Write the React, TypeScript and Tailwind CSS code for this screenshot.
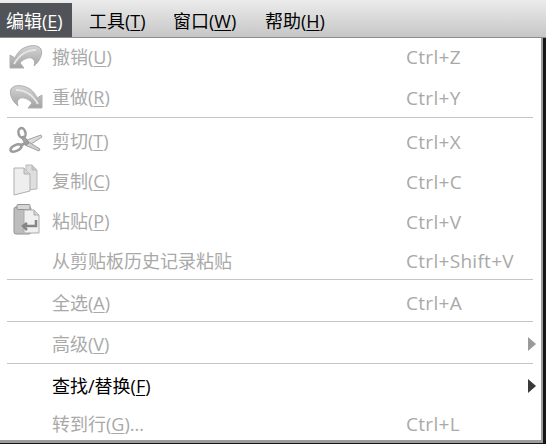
import React from "react";

const font = "font-['Open_Sans','Noto_Sans_CJK_SC',sans-serif]";

const UndoIcon = ({ flip }: { flip?: boolean }) => (
  <svg width="36" height="28" viewBox="0 0 36 28" className={flip ? "-scale-x-100" : ""}>
    <defs>
      <linearGradient id="arrowGrey" x1="0" y1="0" x2="0" y2="1">
        <stop offset="0" stopColor="#d4d4d4" />
        <stop offset="1" stopColor="#a2a2a2" />
      </linearGradient>
    </defs>
    <path
      d="M2 11 L2 24 L16 24 L12 19 C15 15 22 12 25 15 C27 17 27 19 26 22 C32 17 35 10 33 5 C30 0 20 1 14 5 C11 7 8 11 7 14 Z"
      fill="url(#arrowGrey)"
      stroke="#b0b0b0"
      strokeWidth="1"
    />
    <path d="M6 20 C11 11 20 5 28 6" fill="none" stroke="#e6e6e6" strokeWidth="2" />
  </svg>
);

const ScissorsIcon = () => (
  <svg width="36" height="30" viewBox="0 0 36 30">
    <path d="M19 15 L33 10 L34 12 L23 19 Z" fill="#dcdcdc" stroke="#a4a4a4" />
    <path d="M19 16 L32 24 L31 26 L17 20 Z" fill="#d0d0d0" stroke="#a0a0a0" />
    <path d="M21 18 L16 11 L13 12 L18 20 Z" fill="#a6a6a6" stroke="#8e8e8e" />
    <ellipse cx="14" cy="8" rx="3.5" ry="5" fill="none" stroke="#9c9c9c" strokeWidth="2.5" transform="rotate(-15 14 8)" />
    <ellipse cx="8" cy="23" rx="6" ry="3" fill="none" stroke="#9c9c9c" strokeWidth="2.5" transform="rotate(-25 8 23)" />
    <path d="M19 17 L12 21" stroke="#9c9c9c" strokeWidth="3" />
  </svg>
);

const CopyIcon = () => (
  <svg width="28" height="32" viewBox="0 0 28 32">
    <path d="M14 1 H20 L25 6 V25 L14 26 Z" fill="#dedede" stroke="#b8b8b8" />
    <path d="M20 1 V6 H25" fill="#c8c8c8" stroke="#b8b8b8" />
    <path d="M2 4 H12 L18 10 V27 L2 31 Z" fill="#eeeeee" stroke="#b0b0b0" />
    <path d="M12 4 V10 H18" fill="#d4d4d4" stroke="#b0b0b0" />
  </svg>
);

const PasteIcon = () => (
  <svg width="28" height="32" viewBox="0 0 28 32">
    <rect x="1" y="3" width="17" height="27" rx="2" fill="#bdbdbd" stroke="#939393" />
    <rect x="4" y="0.5" width="13" height="5" rx="1" fill="#d6d6d6" stroke="#939393" />
    <path d="M11 6 H21 L26 11 V29 H11 Z" fill="#f0f0f0" stroke="#ababab" />
    <path d="M21 6 V11 H26" fill="#d4d4d4" stroke="#ababab" />
    <path d="M23 16 V22 H11 M14 19 L10 22 L14 26" fill="none" stroke="#858585" strokeWidth="2.5" />
  </svg>
);

type Item = {
  label: string;
  mnemonic?: string;
  suffix?: string;
  shortcut?: string;
  icon?: React.ReactNode;
  sub?: boolean;
  active?: boolean;
  h: string;
};

const Label = ({ text, m, suffix }: { text: string; m?: string; suffix?: string }) => (
  <>
    {text}
    {m && (
      <>
        (<span className="underline underline-offset-2">{m}</span>)
      </>
    )}
    {suffix}
  </>
);

const Row = ({ item }: { item: Item }) => (
  <div className={`flex items-center ${item.h} ${item.active ? "text-black" : "text-[#a9a9a9]"}`}>
    <div className="w-[52px] flex items-center shrink-0">{item.icon}</div>
    <div className="w-[354px] shrink-0 whitespace-nowrap">
      <Label text={item.label} m={item.mnemonic} suffix={item.suffix} />
    </div>
    <div className="flex-1 whitespace-nowrap text-[19px] tracking-[0.3px] pt-[2px]">{item.shortcut}</div>
    {item.sub && (
      <div
        className={`w-0 h-0 mr-[5px] border-y-[7px] border-y-transparent border-l-[8px] ${
          item.active ? "border-l-[#3a3a3a]" : "border-l-[#9a9a9a]"
        }`}
      />
    )}
  </div>
);

const Sep = () => <div className="h-px bg-[#c4c4c4] ml-[7px] mr-[8px]" />;

const menus = [
  { t: "编辑", m: "E", w: "w-[72px] pl-[6px]", on: true },
  { t: "工具", m: "T", w: "w-[84px] pl-[17px]" },
  { t: "窗口", m: "W", w: "w-[92px] pl-[17px]" },
  { t: "帮助", m: "H", w: "w-[84px] pl-[17px]" },
];

export default function App() {
  return (
    <div className={`w-[546px] h-[444px] overflow-hidden bg-[#15151a] text-[18px] leading-none ${font}`}>
      <div className="flex h-[38px] pt-[3px] bg-gradient-to-b from-[#ececec] to-[#c6c6c6] border-b border-[#8c8c8c]">
        {menus.map((m) => (
          <div
            key={m.t}
            className={`flex items-center pt-[2px] ${m.w} ${m.on ? "bg-[#505357] text-white" : "text-black"}`}
          >
            <Label text={m.t} m={m.m} />
          </div>
        ))}
      </div>
      <div className="w-[543px] h-[405px] bg-white border-r-2 border-b-[3px] border-[#9c9c9c]">
        <Row item={{ label: "撤销", mnemonic: "U", shortcut: "Ctrl+Z", icon: <div className="ml-[8px] mt-[3px]"><UndoIcon /></div>, h: "h-[37px]" }} />
        <Row item={{ label: "重做", mnemonic: "R", shortcut: "Ctrl+Y", icon: <div className="ml-[8px] mt-[1px]"><UndoIcon flip /></div>, h: "h-[42px] pt-[2px]" }} />
        <Sep />
        <Row item={{ label: "剪切", mnemonic: "T", shortcut: "Ctrl+X", icon: <div className="ml-[8px] -mt-[2px]"><ScissorsIcon /></div>, h: "h-[42px] pt-[4px]" }} />
        <Row item={{ label: "复制", mnemonic: "C", shortcut: "Ctrl+C", icon: <div className="ml-[12px] -mt-[2px]"><CopyIcon /></div>, h: "h-[40px] pt-[2px]" }} />
        <Row item={{ label: "粘贴", mnemonic: "P", shortcut: "Ctrl+V", icon: <div className="ml-[13px] -mt-[2px]"><PasteIcon /></div>, h: "h-[40px] pt-[2px]" }} />
        <Row item={{ label: "从剪贴板历史记录粘贴", shortcut: "Ctrl+Shift+V", h: "h-[39px] pt-[2px]" }} />
        <Sep />
        <Row item={{ label: "全选", mnemonic: "A", shortcut: "Ctrl+A", h: "h-[41px] pt-[4px]" }} />
        <Sep />
        <Row item={{ label: "高级", mnemonic: "V", sub: true, h: "h-[41px] pt-[2px]" }} />
        <Sep />
        <Row item={{ label: "查找/替换", mnemonic: "F", sub: true, active: true, h: "h-[41px] pt-[2px]" }} />
        <Row item={{ label: "转到行", mnemonic: "G", suffix: "...", shortcut: "Ctrl+L", h: "h-[35px] pt-[2px]" }} />
      </div>
    </div>
  );
}
